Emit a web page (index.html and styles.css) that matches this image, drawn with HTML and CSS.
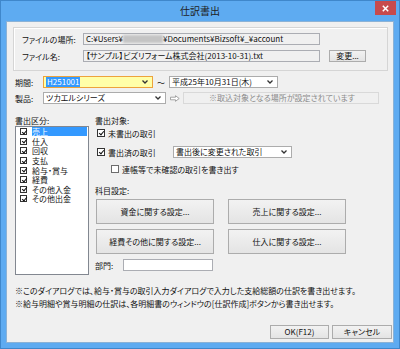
FILE: index.html
```html
<!DOCTYPE html>
<html lang="ja">
<head>
<meta charset="utf-8">
<title>仕訳書出</title>
<link rel="stylesheet" href="styles.css">
</head>
<body>
<div class="window">
  <div class="titlebar">
    <span class="title">仕訳書出</span>
    <div class="close"><svg width="7" height="7" viewBox="0 0 7 7"><path d="M0.8 0.8L6.2 6.2M6.2 0.8L0.8 6.2" stroke="#fff" stroke-width="1.5"/></svg></div>
  </div>
  <div class="client">
    <div class="group">
      <div class="frow"><span class="flabel">ファイルの場所:</span><div class="field ro">C:¥Users¥<span class="blur"></span>¥Documents¥Bizsoft¥_¥account</div></div>
      <div class="frow"><span class="flabel">ファイル名:</span><div class="field ro">【サンプル】ビズリフォーム株式会社(2013-10-31).txt</div><button class="btn change">変更...</button></div>
    </div>

    <div class="row period">
      <span class="lbl">期間:</span>
      <div class="combo focus w110"><span class="sel">H251001</span><svg class="chev" width="6" height="4" viewBox="0 0 6 4"><path d="M0.5 0.5L3 3L5.5 0.5" fill="none" stroke="#333" stroke-width="1.3"/></svg></div>
      <span class="tilde">～</span>
      <div class="combo w109"><span>平成25年10月31日(木)</span><svg class="chev" width="6" height="4" viewBox="0 0 6 4"><path d="M0.5 0.5L3 3L5.5 0.5" fill="none" stroke="#333" stroke-width="1.3"/></svg></div>
    </div>

    <div class="row product">
      <span class="lbl">製品:</span>
      <div class="combo w123"><span>ツカエルシリーズ</span><svg class="chev" width="6" height="4" viewBox="0 0 6 4"><path d="M0.5 0.5L3 3L5.5 0.5" fill="none" stroke="#333" stroke-width="1.3"/></svg></div>
      <span class="arrow"><svg width="10" height="7" viewBox="0 0 10 7"><path d="M0.5 2.2H5.5V0.7L9.2 3.5L5.5 6.3V4.8H0.5Z" fill="#fff" stroke="#9a9a9a" stroke-width="0.9"/></svg></span>
      <div class="field disabled">※取込対象となる場所が設定されています</div>
    </div>

    <div class="main">
      <div class="leftcol">
        <div class="hlabel">書出区分:</div>
        <div class="list">
          <div class="item"><span class="cb on"></span><span class="itext selected">売上</span></div>
          <div class="item"><span class="cb on"></span><span class="itext">仕入</span></div>
          <div class="item"><span class="cb on"></span><span class="itext">回収</span></div>
          <div class="item"><span class="cb on"></span><span class="itext">支払</span></div>
          <div class="item"><span class="cb on"></span><span class="itext">給与・賞与</span></div>
          <div class="item"><span class="cb on"></span><span class="itext">経費</span></div>
          <div class="item"><span class="cb on"></span><span class="itext">その他入金</span></div>
          <div class="item"><span class="cb on"></span><span class="itext">その他出金</span></div>
        </div>
      </div>
      <div class="rightcol">
        <div class="hlabel">書出対象:</div>
        <div class="crow r1"><span class="cb on"></span><span>未書出の取引</span></div>
        <div class="crow r2"><span class="cb on"></span><span class="ctext">書出済の取引</span>
          <div class="combo w119"><span>書出後に変更された取引</span><svg class="chev" width="6" height="4" viewBox="0 0 6 4"><path d="M0.5 0.5L3 3L5.5 0.5" fill="none" stroke="#333" stroke-width="1.3"/></svg></div>
        </div>
        <div class="crow r3"><span class="cb"></span><span>連帳等で未確認の取引を書き出す</span></div>
        <div class="hlabel subj">科目設定:</div>
        <div class="brow first"><button class="btn big">資金に関する設定...</button><button class="btn big">売上に関する設定...</button></div>
        <div class="brow"><button class="btn big">経費その他に関する設定...</button><button class="btn big">仕入に関する設定...</button></div>
        <div class="dept"><span class="dlabel">部門:</span><div class="field dinput"></div></div>
      </div>
    </div>

    <p class="note n1">※このダイアログでは、給与・賞与の取引入力ダイアログで入力した支給総額の仕訳を書き出せます。</p>
    <p class="note n2">※給与明細や賞与明細の仕訳は、各明細書のウィンドウの[仕訳作成]ボタンから書き出せます。</p>

    <div class="footer">
      <button class="btn foot ok">OK(F12)</button>
      <button class="btn foot">キャンセル</button>
    </div>
  </div>
</div>
</body>
</html>
```

FILE: styles.css
```css
* { box-sizing: border-box; }
html, body { margin: 0; padding: 0; }
body {
  font-family: "Noto Sans CJK JP", "Noto Sans", sans-serif;
  font-size: 8px;
  font-feature-settings: "palt";
  color: #111;
  background: #fff;
}
.window {
  width: 400px;
  height: 349px;
  background: #5EABF1;
  border: 1px solid #3F87CB;
  padding: 0 5px 5px;
  display: flex;
  flex-direction: column;
}
.titlebar {
  height: 20px;
  margin: 0 -5px;
  display: grid;
  grid-template-columns: 1fr auto 1fr;
}
.title {
  grid-column: 2;
  font-size: 10px;
  line-height: 20px;
  color: #1e1e1e;
}
.close {
  grid-column: 3;
  justify-self: end;
  width: 21px;
  height: 14px;
  margin-right: 3px;
  background: #C74A4C;
  display: flex;
  align-items: center;
  justify-content: center;
}
.client {
  flex: 1;
  background: #F0F0F0;
  border: 1px solid #8BB2D6;
  display: flex;
  flex-direction: column;
}
.group {
  margin: 5px 0 0 6px;
  width: 375px;
  height: 44px;
  border: 1px solid #D5D5D5;
  box-shadow: inset 1px 1px 0 #fff;
  padding: 5px 0 0 8px;
  display: flex;
  flex-direction: column;
  gap: 5px;
}
.frow { display: flex; align-items: center; height: 12px; }
.flabel { width: 61px; white-space: nowrap; }
.field {
  height: 12px;
  border: 1px solid #ABADB3;
  line-height: 10px;
  padding-left: 2px;
  white-space: nowrap;
  overflow: hidden;
}
.field.ro { width: 237px; background: #F0F0F0; }
.blur {
  display: inline-block;
  width: 40px;
  height: 8px;
  vertical-align: -1px;
  background: #c4c4c4;
  filter: blur(1.2px);
}
.btn {
  font: inherit;
  font-feature-settings: "palt";
  color: #111;
  border: 1px solid #ACACAC;
  background: linear-gradient(#F2F2F2, #E4E4E4);
  padding: 0;
  margin: 0;
  line-height: 1;
}
.change { margin-left: 9px; width: 37px; height: 12px; }
.row { display: flex; align-items: center; height: 12px; margin-left: 8px; }
.period { margin-top: 5px; }
.product { margin-top: 4px; }
.lbl { width: 28px; }
.combo {
  height: 12px;
  border: 1px solid #ACACAC;
  background: #fff;
  display: flex;
  align-items: center;
  padding-left: 2px;
  white-space: nowrap;
  line-height: 10px;
}
.combo .chev { margin-left: auto; margin-right: 4px; flex: none; }
.combo.focus { background: #FFFFA8; border-color: #EDA33C; }
.sel { background: #3399FF; color: #fff; padding: 0 1px; }
.w110 { width: 110px; }
.w109 { width: 109px; }
.w123 { width: 123px; }
.w119 { width: 119px; }
.tilde { width: 16px; text-align: center; }
.arrow { width: 17px; display: flex; justify-content: center; }
.field.disabled {
  width: 196px;
  background: #F0F0F0;
  border-color: #D9D9D9;
  color: #8c8c8c;
  text-align: center;
}
.main { display: flex; margin: 11px 0 0 8px; }
.leftcol { width: 74px; }
.hlabel { height: 11px; line-height: 11px; }
.list {
  height: 149px;
  background: #fff;
  border: 1px solid #828790;
  padding-top: 0;
}
.item { height: 9.6px; display: flex; align-items: center; }
.item .cb { margin-left: 4px; width: 7px; height: 7px; }
.itext { margin-left: 5px; flex: 1; margin-right: 1px; line-height: 9px; height: 9px; }
.itext.selected { background: #3399FF; color: #fff; }
.cb {
  flex: none;
  width: 8px;
  height: 8px;
  border: 1px solid #6d6d6d;
  background: #fff;
  position: relative;
}
.cb.on { border-color: #333; }
.cb.on::after {
  content: "";
  position: absolute;
  left: 1.5px;
  top: -0.5px;
  width: 2px;
  height: 4px;
  border: solid #111;
  border-width: 0 1.3px 1.3px 0;
  transform: rotate(40deg);
}
.rightcol { margin-left: 6px; display: flex; flex-direction: column; }
.crow { display: flex; align-items: center; padding-left: 2px; }
.crow .cb { margin-right: 3px; }
.r1 { margin-top: 2px; height: 10px; }
.r2 { margin-top: 8px; height: 12px; }
.r2 .ctext { width: 65px; }
.r3 { margin-top: 6px; height: 10px; padding-left: 16px; }
.subj { margin-top: 12px; height: 10px; line-height: 10px; }
.brow { display: flex; gap: 14px; padding-left: 1px; margin-top: 5px; }
.brow.first { margin-top: 3px; }
.big { width: 118px; height: 25px; }
.dept { display: flex; align-items: center; height: 12px; margin-top: 5px; }
.dlabel { width: 28px; }
.dinput { width: 90px; background: #fff; }
.note { margin: 0 0 0 8px; height: 10px; line-height: 10px; white-space: nowrap; }
.n1 { margin-top: 11px; }
.n2 { margin-top: 3px; }
.footer { display: flex; justify-content: flex-end; gap: 3px; margin: 16px 1px 0 0; }
.foot { width: 60px; height: 14px; }
.foot.ok { width: 59px; }
```
